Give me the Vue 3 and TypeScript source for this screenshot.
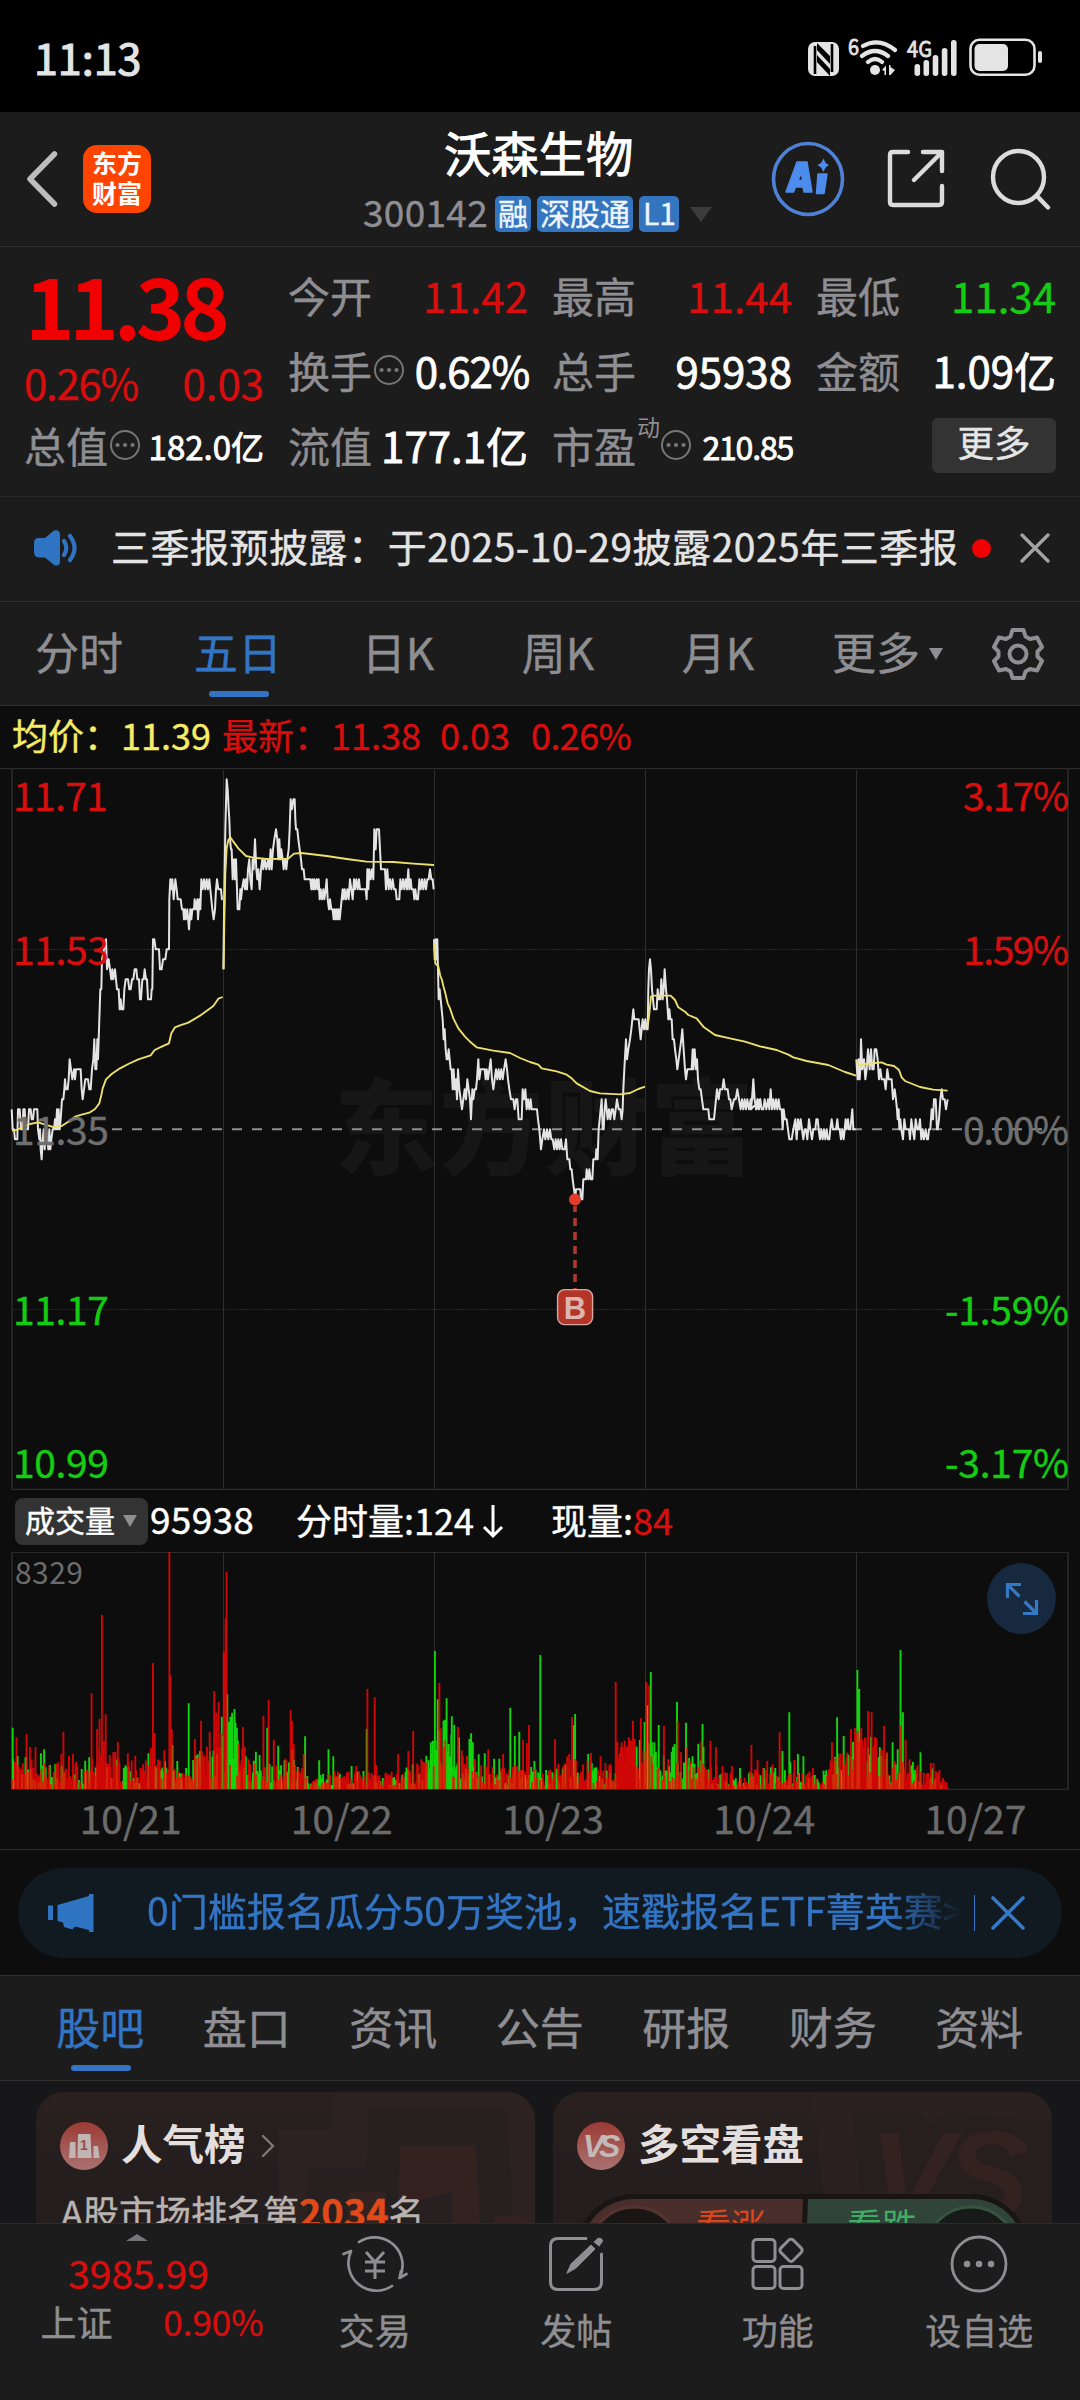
<script setup lang="ts">
interface Segment {
  dx: number
  dy: number
  data: string
}

// One unit of the price chart is a third of a pixel; a cent is 30 units high.
const ZERO = 1084

const priceDays: Segment[][] = [
  [{ dx: 0, dy: 0, data: '35:2 38:0 42:0 45:-1 52:-1 54:2 59:2 63:0 68:0 70:2 74:2 77:0 84:0 87:2 92:2 95:1 99:1 102:2 112:2 114:0 118:-1 120:0 122:-2 125:-3 128:-1 131:0 134:-2 138:0 142:-1 145:-2 148:0 151:-2 154:-1 158:0 162:0 165:1 168:0 171:2 174:0 176:2 179:0 182:1 186:3 190:3 193:4 195:5 198:4 203:4 206:5 209:7 213:6 217:5 222:6 225:5 228:6 242:6 245:4 248:3 252:4 256:5 264:5 268:4 272:4 276:6 280:7 283:9 286:6 289:6 292:9 294:7 296:9 298:11 301:14 304:14 306:17 312:18 318:19 321:16 326:17 330:16 334:15 337:16 340:15 345:16 348:15 351:14 356:14 359:12 362:13 365:12 370:12 373:14 377:15 384:15 388:14 392:14 396:15 400:15 404:16 409:16 412:15 417:15 420:13 423:13 427:15 431:15 434:16 438:15 441:15 444:13 453:13 455:14 457:14 459:19 463:19 467:18 477:18 480:16 485:16 489:17 496:17 500:18 507:18 508:23 511:25 514:24 517:25 521:23 526:25 530:24 533:23 542:23 546:22 550:22 552:21 555:22 558:21 562:22 567:20 571:22 574:21 577:22 582:22 584:23 588:22 592:23 594:21 598:23 601:22 604:25 608:24 612:25 616:24 620:25 624:24 628:25 631:24 634:23 637:22 641:21 645:22 648:24 651:25 655:24 663:24 666:23 668:23' }],
  [{ dx: 0, dy: 0, data: '670:16 673:24 676:30 680:35 683:34 686:32 688:31 690:29 693:28 695:28 698:25 702:27 705:25 708:27 711:24 713:22 718:22 721:24 723:23 726:24 731:25 735:24 738:25 741:24 744:26 748:27 751:25 755:24 758:27 761:26 765:29 769:26 772:25 775:26 779:24 783:26 787:27 790:26 794:27 799:26 804:27 808:26 812:28 815:26 819:28 823:29 828:30 832:29 835:27 838:29 841:27 844:28 848:27 851:26 855:27 859:26 862:27 866:28 869:30 872:33 876:32 880:33 884:33 886:31 888:30 892:30 895:29 899:28 903:27 906:26 911:26 914:25 931:25 934:24 937:25 940:24 943:25 946:24 950:25 953:24 956:25 959:23 962:24 966:23 970:24 973:23 977:24 980:25 983:23 987:22 990:23 994:22 998:22 1001:21 1004:22 1007:21 1010:22 1013:21 1016:22 1019:21 1022:22 1025:23 1028:24 1031:23 1034:24 1038:23 1042:24 1046:23 1050:25 1054:24 1058:23 1062:25 1065:24 1069:25 1073:24 1077:25 1080:24 1097:24 1100:23 1102:26 1105:24 1108:26 1112:25 1116:26 1120:25 1123:30 1127:28 1130:30 1137:30 1140:28 1143:26 1155:26 1158:24 1162:26 1166:24 1170:25 1174:24 1178:25 1182:24 1187:24 1190:23 1198:23 1201:25 1205:24 1209:25 1213:24 1217:25 1221:24 1225:26 1228:24 1232:25 1235:24 1240:24 1243:23 1246:24 1250:23 1254:23 1258:25 1262:24 1266:25 1270:24 1274:25 1278:24 1282:25 1286:25 1290:26 1294:25 1298:25 1301:24' }],
  [{ dx: 1290, dy: 0, data: '12:19 14:17 17:19 20:17 22:19 24:16 26:13 29:14 32:13 35:12 38:11 41:9 44:10 47:8 50:7 53:7 56:8 59:7 62:6 65:6 68:4 71:6 74:4 78:5 81:3 84:6 88:4 92:3 96:2 100:3 104:4 108:3 112:5 116:4 120:3 123:1 127:4 130:3 134:4 138:4 141:5 145:7 148:5 152:6 164:6 167:5 170:6 174:5 178:6 182:7 186:5 190:4 194:5 198:6 202:5 206:6 210:5 214:6 218:5 222:6 227:7 231:6 234:5 238:4 243:3 250:3 254:2 258:3 262:3 266:1 275:1 278:4 282:3 286:4 290:2 294:3 298:2 302:3 305:2 321:2 324:1 328:0 333:-2 337:-1 342:0 346:-1 351:0 355:-1 360:0 364:-1 368:-1 373:-2 377:-1 381:-2 385:-1 389:-2 393:-1 397:-2 404:-2 408:-1 412:-3 418:-3 421:-4 425:-4 428:-5 432:-6 436:-7 438:-6 451:-6 453:-7 457:-7 460:-5 468:-5 470:-4 475:-5 478:-4 482:-5 487:-5 490:-3 497:-3 499:-2 503:-3 506:0 509:1 512:2 515:3 518:0 521:0 524:2 527:3 530:2 533:1 537:2 541:1 545:2 549:2 553:1 557:2 561:3 566:2 571:2 575:1 578:2 580:4 583:6 588:9 591:7 595:8 600:9 604:10 607:11 610:12 613:11 626:11 629:10 632:9 635:10 638:11 642:10 646:11 649:10 653:10 655:14 657:16 660:17 663:16 666:14 669:13 672:12 680:12 683:14 687:13 691:13 694:15 698:13 701:14 704:16 708:14 711:13 715:11 718:12 721:11 725:11 728:9 732:9 735:8 739:7 742:6 746:7 750:8 754:9 757:10 761:8 765:6 768:5 772:6 785:6 788:8 790:6 794:8 798:6 801:7 804:5 808:4 812:4 816:3 820:2 835:2 838:1 852:1 855:2 858:3 861:4 866:3 870:4 877:4 881:5 885:4 893:4 897:3 901:3 905:2 912:3 917:3 922:4 927:3 932:2 936:3 940:2 944:3 948:2 952:3 957:2 962:3 967:3 970:5 974:3 978:2 982:3 986:2 990:3' },
   { dx: 2250, dy: 0, data: '3:2 6:3 10:5 14:3 19:2 23:3 27:2 31:3 35:2 40:2 44:3 49:2 54:3 58:2 62:4 66:2 70:3 74:2 78:3 82:2 86:3 90:2 95:2 98:0 101:2 105:1 110:1 114:0 118:-1 125:-1 130:0 136:1 140:-1 144:1 148:0 152:1 156:0 160:-1 164:0 168:0 172:-1 177:1 181:0 186:-1 190:0 196:0 199:1 203:1 206:0 210:-1 214:0 218:-1 222:0 226:-1 230:0 234:-1 238:-1 241:0 245:1 249:0 258:0 262:1 265:0 269:0 273:-1 277:0 281:-1 284:0 287:1 290:0 294:1 297:0 301:0 304:1 307:2 310:0 317:0' }],
  [{ dx: 2250, dy: 0, data: '319:7 323:5 326:7 329:5 331:6 333:9 337:6 342:7 346:5 350:6 354:8 359:6 363:8 367:6 371:6 374:8 379:8 383:7 387:5 391:6 395:5 403:5 407:4 412:6 416:5 425:5 429:3 434:4 438:3 441:2 443:1 446:2 448:0 451:1 454:0 459:-1 463:1 467:0 477:0 480:-1 484:1 488:0 493:-1 497:1 502:0 506:0 510:1 514:-1 518:0 522:-1 527:0 531:-1 534:-1 537:0 541:0 545:2 549:1 552:3 557:3 561:0 563:0 567:1 571:3 575:4 579:3 584:3 588:2 593:3' }]
]

const averageDays: Segment[][] = [
  [{ dx: 0, dy: -24, data: '36:1112 50:1110 70:1100 90:1092 115:1087 135:1094 160:1101 185:1098 205:1085 225:1070 245:1064 268:1058 285:1047 298:1030 304:1005 308:985 318:958 335:942 360:925 385:912 415:898 452:886 464:870 485:860 507:850 514:820 525:802 540:796 565:788 600:767 640:738 655:716 668:711' }],
  [{ dx: 0, dy: -24, data: '671:628 673:480 676:340 680:265 685:240 691:232 700:245 715:265 738:288 760:293 800:297 865:296 882:281 905:279 980:288 1040:297 1100:305 1180:306 1240:311 1302:315' }],
  [{ dx: 1290, dy: 396, data: '13:130 16:190 20:195 24:195 31:228 36:240 40:258 46:280 53:310 60:325 70:355 85:385 105:410 120:425 140:442 190:452 240:459 270:474 300:486 325:494 335:505 380:514 410:524 425:535 440:550 480:573 510:580 570:583 600:579 625:567 645:560' }],
  [{ dx: 1290, dy: 396, data: '653:380 657:350 663:290 670:287 722:287 735:300 745:322 765:335 775:345 800:355 820:380 855:405 900:415 945:425 990:439' },
   { dx: 2250, dy: -24, data: '30:859 80:870 115:884 130:892 170:903 235:915 285:936 318:947' }],
  [{ dx: 2250, dy: -24, data: '319:903 322:905 328:918 345:912 395:907 410:914 432:918 447:930 455:952 465:963 510:981 550:989 593:992' }]
]

function toPoints(segments: Segment[], toY: (v: number) => number): string {
  return segments
    .flatMap((s) => s.data.split(' ').map((p) => {
      const [x, v] = p.split(':').map(Number)
      return `${x + s.dx},${toY(v) + s.dy}`
    }))
    .join(' ')
}

const priceLines = priceDays.map((d) => toPoints(d, (v) => ZERO - v * 30))
const averageLines = averageDays.map((d) => toPoints(d, (v) => v))

// Volume peaks: x, top and direction (r = up, g = down).
const peaks = '37,743g 48,772r 77,762r 87,801r 103,801r 128,808g 119,820g 145,855g 184,755r 178,822r 200,827r 212,822r 266,640r 259,832g 296,405r 282,747r 289,717r 307,703r 301,782r 342,786r 335,815r 371,820r 393,827r 431,820g 444,549r 449,759r 438,804r 477,811r 492,216r 495,586r 499,747r 501,795g 515,843g 548,670g 566,777r 568,827g 584,722r 581,813g 601,800r 609,755r 622,633r 628,698r 635,666r 644,710g 650,515r 655,415r 658,276r 660,643g 664,725g 669,710g 674,698g 681,687g 684,728g 688,743g 706,741r 711,800r 743,815g 754,825g 765,707r 780,660r 776,743g 795,780r 808,797g 844,690r 848,722r 853,792r 849,808g 886,769g 882,822r 927,841g 954,808g 968,829g 1021,858g 1035,858r 1067,627r 1065,747g 1088,652r 1093,855r 1156,822r 1186,813r 1200,753r 1238,827g 1251,787g 1257,782g 1263,513g 1271,658g 1276,609r 1280,745r 1288,722g 1292,719g 1297,655g 1312,709g 1319,735g 1330,741r 1333,772g 1344,827r 1356,827r 1363,777g 1368,760g 1373,787g 1390,823g 1408,820g 1418,808r 1435,836g 1450,836g 1461,822r 1482,683g 1495,768g 1508,755g 1519,780r 1530,790r 1536,735r 1552,843g 1569,525g 1586,870g 1612,778r 1636,858r 1653,822r 1661,710r 1667,735g 1670,702g 1708,822g 1716,819r 1744,829r 1758,849r 1773,852r 1788,606r 1793,785r 1808,801r 1814,782r 1826,772r 1838,722r 1861,715r 1858,780g 1872,726g 1876,606r 1880,676g 1885,616r 1890,576g 1893,787g 1900,787g 1913,735g 1928,738r 1954,800g 1959,792g 1966,666g 1968,725r 1978,817r 1992,728g 1995,804r 2011,829g 2028,791g 2040,732g 2037,783r 2043,801g 2063,782r 2079,801r 2098,858r 2126,858r 2149,864g 2182,795r 2200,840r 2228,843r 2244,853r 2264,757r 2272,813g 2292,697g 2295,846g 2307,840r 2317,822g 2333,829g 2361,864r 2416,787r 2431,712g 2426,834r 2450,768g 2471,747r 2477,785g 2483,744r 2490,570g 2495,627g 2501,778r 2514,775r 2521,693r 2531,697r 2541,771r 2567,738r 2576,817r 2559,808r 2592,787g 2607,808g 2615,510g 2622,697g 2616,738r 2630,780r 2651,846g 2673,817g 2703,849r 2711,849r 2728,870r'

// Typical bar height by position, with the share of falling minutes.
const envelope: [number, number, number][] = [
  [12, 36, 0.4], [50, 24, 0.4], [90, 26, 0.25], [105, 52, 0.05], [115, 30, 0.4], [150, 26, 0.2], [172, 28, 0.4],
  [190, 24, 0.4], [205, 40, 0.3], [222, 62, 0.3], [232, 60, 0.8], [245, 34, 0.4], [258, 24, 0.6], [290, 30, 0.3],
  [310, 15, 0.6], [345, 19, 0.3], [370, 16, 0.4], [400, 16, 0.4], [425, 30, 0.3], [436, 60, 0.8], [450, 58, 0.7],
  [470, 32, 0.4], [500, 19, 0.4], [520, 24, 0.5], [545, 16, 0.5], [565, 32, 0.25], [590, 25, 0.3], [615, 21, 0.3],
  [622, 48, 0.1], [640, 52, 0.3], [652, 48, 0.7], [668, 36, 0.8], [690, 32, 0.4], [710, 23, 0.4], [740, 14, 0.3],
  [765, 21, 0.3], [800, 17, 0.3], [820, 16, 0.4], [843, 38, 0.3], [858, 58, 0.3], [875, 50, 0.3], [890, 28, 0.3],
  [904, 38, 0.4], [925, 16, 0.4], [935, 21, 0.3], [949, 5, 0.2]
]

interface Bar {
  x: number
  h: number
  up: boolean
}

function buildBars(): Bar[] {
  let seed = 20251
  const rand = () => {
    seed = (seed * 16807) % 2147483647
    return seed / 2147483647
  }
  const bars: Bar[] = []
  for (let i = 0; i < 1066; i++) {
    const x = 12.3 + i * 0.878
    const k = Math.max(1, envelope.findIndex((e) => e[0] >= x))
    const [x0, h0, g0] = envelope[k - 1]
    const [x1, h1, g1] = envelope[k]
    const t = (x - x0) / (x1 - x0)
    const h = (h0 + (h1 - h0) * t) * (0.2 + 0.9 * Math.pow(rand(), 1.3))
    bars.push({ x, h, up: rand() > g0 + (g1 - g0) * t })
  }
  for (const p of peaks.split(' ')) {
    const [x, y] = p.slice(0, -1).split(',').map(Number)
    bars.push({ x: x / 2.904, h: (927 - y) / 3, up: p.endsWith('r') })
  }
  return bars.sort((a, b) => a.x - b.x)
}

const bars = buildBars()
const barPath = (up: boolean) =>
  bars.filter((b) => b.up === up).map((b) => `M${b.x.toFixed(1)} 237V${(237 - b.h).toFixed(1)}`).join('')
const upBars = barPath(true)
const downBars = barPath(false)

const gridX = [223.5, 434.5, 645.5, 856.5]
const leftAxis = [
  { v: '11.71', y: 43, w: 95, c: 'up' },
  { v: '11.53', y: 197, w: 96, c: 'up' },
  { v: '11.35', y: 377, w: 96, c: 'flat' },
  { v: '11.17', y: 557, w: 96, c: 'down' },
  { v: '10.99', y: 710, w: 96, c: 'down' }
]
const rightAxis = [
  { v: '3.17%', y: 43, w: 106, c: 'up' },
  { v: '1.59%', y: 197, w: 106, c: 'up' },
  { v: '0.00%', y: 377, w: 106, c: 'flat' },
  { v: '-1.59%', y: 557, w: 124, c: 'down' },
  { v: '-3.17%', y: 710, w: 124, c: 'down' }
]
const dates = ['10/21', '10/22', '10/23', '10/24', '10/27']
const periods = ['分时', '五日', '日K', '周K', '月K']
const sections = ['股吧', '盘口', '资讯', '公告', '研报', '财务', '资料']
</script>

<template>
  <div class="screen">
    <div class="status">
      <span class="clock">11:13</span>
      <svg class="status-icons" width="240" height="44" viewBox="805 36 240 44">
        <g fill="#e4e4e4">
          <rect x="808" y="43" width="31" height="34" rx="7" />
          <path d="M815 47V75M832 45V73" stroke="#000" stroke-width="2.600" />
          <path d="M817 44L830 57V65L817 51ZM817 56L830 70V77L817 63Z" fill="#000" />
          <text x="848" y="56" class="tiny" textLength="11" lengthAdjust="spacingAndGlyphs">6</text>
          <text x="907" y="58" class="tiny" textLength="25" lengthAdjust="spacingAndGlyphs">4G</text>
          <circle cx="875" cy="71" r="5" />
          <path d="M882 71l4-4.500v9.500h-1.500v-4zM889 66h1.500v2l4.500 3-4.500 5h-1.500z" />
          <rect x="914.500" y="65" width="5.600" height="12" rx="2.700" />
          <rect x="923.500" y="61" width="5.600" height="16" rx="2.700" />
          <rect x="932.700" y="56" width="5.600" height="21" rx="2.700" />
          <rect x="941.800" y="49" width="5.600" height="28" rx="2.700" />
          <rect x="951" y="41" width="5.600" height="36" rx="2.700" />
          <rect x="974.500" y="45" width="33.500" height="27" rx="5" />
          <rect x="1038" y="52" width="4" height="12" rx="2" />
        </g>
        <g fill="none" stroke="#e4e4e4" stroke-linecap="round">
          <rect x="970.500" y="40.800" width="64" height="35" rx="9" stroke-width="2.600" />
          <path d="M868 63Q875 57 882 63M862 57Q875 47 888 57M863 47Q879 38 895 51" stroke-width="4.200" />
        </g>
      </svg>
    </div>

    <header class="head">
      <div class="head-left">
        <svg width="32" height="58" viewBox="0 0 32 58"><path d="M28.500 4L4 29 28.500 54" fill="none" stroke="#bdbdbd" stroke-width="5.500" stroke-linecap="round" stroke-linejoin="round" /></svg>
        <div class="logo"><span>东方</span><span>财富</span></div>
      </div>
      <div class="head-title">
        <h1>沃森生物</h1>
        <div class="code">
          <span class="num">300142</span>
          <span class="tag one">融</span><span class="tag">深股通</span><span class="tag lv">L1</span>
          <i class="caret"></i>
        </div>
      </div>
      <div class="head-right">
        <svg width="74" height="76" viewBox="0 0 74 76">
          <ellipse cx="37" cy="38" rx="34.500" ry="35.500" fill="none" stroke="#4f82d6" stroke-width="3.600" />
          <path d="M15 51L26 21H36L41 51H33L32 46H24.500L22.500 51ZM27 39.500H31.500L30.500 31.500ZM47 33H56L53 52.500H45.500Z" fill="#4d8bec" stroke="#4d8bec" stroke-width="1.500" stroke-linejoin="round" />
          <path d="M52.500 17.500L54.600 22 58 24 54.600 26.500 52.500 31 50 26.500 46.500 24 50 22Z" fill="#4d8bec" />
        </svg>
        <svg width="58" height="60" viewBox="0 0 58 60" fill="none" stroke="#dcdcdc" stroke-width="4.400" stroke-linecap="round" stroke-linejoin="round">
          <path d="M21 3H6Q3 3 3 6V53Q3 56 6 56H52Q55 56 55 53V37" />
          <path d="M36 3H55V22M55 3L27 31" />
        </svg>
        <svg width="62" height="64" viewBox="0 0 62 64" fill="none" stroke="#dcdcdc" stroke-width="4.400" stroke-linecap="round">
          <ellipse cx="29.500" cy="30" rx="25.500" ry="26" /><path d="M48 49L59 60.500" />
        </svg>
      </div>
    </header>

    <section class="quote">
      <div class="price">
        <div class="last">11.38</div>
        <div class="change"><span class="pct">0.26%</span><span>0.03</span></div>
      </div>
      <div class="cell"><label>今开</label><b class="red">11.42</b></div>
      <div class="cell"><label>最高</label><b class="red">11.44</b></div>
      <div class="cell"><label>最低</label><b class="green">11.34</b></div>
      <div class="cell">
        <label>换手</label>
        <svg class="info" viewBox="0 0 32 32"><circle cx="16" cy="16" r="14" /><path d="M8.500 16h.1M16 16h.1M23.500 16h.1" /></svg>
        <b class="tight">0.62%</b>
      </div>
      <div class="cell"><label>总手</label><b>95938</b></div>
      <div class="cell"><label>金额</label><b>1.09亿</b></div>
      <div class="cell first">
        <label>总值</label>
        <svg class="info" viewBox="0 0 32 32"><circle cx="16" cy="16" r="14" /><path d="M8.500 16h.1M16 16h.1M23.500 16h.1" /></svg>
        <b class="small">182.0亿</b>
      </div>
      <div class="cell"><label>流值</label><b>177.1亿</b></div>
      <div class="cell">
        <label>市盈</label><sup>动</sup>
        <svg class="info" viewBox="0 0 32 32"><circle cx="16" cy="16" r="14" /><path d="M8.500 16h.1M16 16h.1M23.500 16h.1" /></svg>
        <b class="small ratio">210.85</b>
      </div>
      <div class="cell end"><button class="more"><span>更多</span></button></div>
    </section>

    <section class="notice">
      <svg width="46" height="38" viewBox="0 0 46 38">
        <path d="M6 9H12L21 1.500Q27 0 27 6V32Q27 38 21 36L12 28.500H6Q1 28 1 23V14Q1 9 6 9Z" fill="#2f74c2" />
        <path d="M31 12Q35.500 19 31 26M37 7Q46 19 37 31" fill="none" stroke="#2f74c2" stroke-width="4.200" stroke-linecap="round" />
      </svg>
      <p>三季报预披露：于2025-10-29披露2025年三季报</p>
      <i class="dot"></i>
      <svg width="32" height="32" viewBox="0 0 32 32"><path d="M3 3L29 29M29 3L3 29" stroke="#a3a3a3" stroke-width="3.400" stroke-linecap="round" /></svg>
    </section>

    <nav class="periods">
      <div v-for="(p, i) in periods" :key="p" class="period" :class="{ active: i === 1 }"><span>{{ p }}</span></div>
      <div class="period-more"><span>更多</span><i></i></div>
      <svg width="54" height="54" viewBox="-27 -27 54 54" fill="none" stroke="#8e8e93" stroke-width="4" stroke-linejoin="round">
        <path d="M-5.500-24H5.500L7.500-17.500 12-15 19-16.500 24-7 19.500-2.500V2.500L24 7 19 16.500 12 15 7.500 17.500 5.500 24H-5.500L-7.500 17.500-12 15-19 16.500-24 7-19.500 2.500V-2.500L-24-7-19-16.500-12-15-7.500-17.500Z" />
        <circle r="8.500" />
      </svg>
    </nav>

    <div class="legend">
      <span class="avg">均价：</span><span class="avg n1">11.39</span>
      <span class="now">最新：</span><span class="now n2">11.38</span><span class="now n3">0.03</span><span class="now n4">0.26%</span>
    </div>

    <svg class="chart" width="1080" height="722" viewBox="0 0 1080 722">
      <text x="334" y="399" class="mark" textLength="420">东方财富</text>
      <g stroke="#2d2d2d" stroke-width="1.200">
        <path d="M0 .6H1080M12 721.300H1068" />
        <path v-for="x in gridX" :key="x" :d="`M${x} 2V721`" />
      </g>
      <path d="M12 0V722M1068 0V722" stroke="#242424" stroke-width="2" />
      <path d="M12 181.500H1068M12 541.500H1068" stroke="#303030" stroke-width="1" stroke-dasharray="1.500 1.500" />
      <path d="M112 361.300H1068" stroke="#909090" stroke-width="2" stroke-dasharray="10 10" />
      <g transform="scale(.33333)" fill="none" stroke-linejoin="round">
        <polyline v-for="(l, i) in priceLines" :key="'p' + i" :points="l" stroke="#e4e4e4" stroke-width="6" />
        <polyline v-for="(l, i) in averageLines" :key="'a' + i" :points="l" stroke="#eee06c" stroke-width="5.600" />
      </g>
      <text v-for="a in leftAxis" :key="a.v" x="13" :y="a.y" :textLength="a.w" class="axis" :class="a.c">{{ a.v }}</text>
      <text v-for="a in rightAxis" :key="a.v" x="1069" :y="a.y" :textLength="a.w" class="axis right" :class="a.c">{{ a.v }}</text>
      <circle cx="575" cy="431.500" r="6" fill="#e23d2a" />
      <path d="M575 438V522" stroke="#b0382b" stroke-width="3.600" stroke-dasharray="8 6" stroke-dashoffset="2" />
      <rect x="557.600" y="521.600" width="35" height="35" rx="7" fill="#b23528" stroke="#d8a9a2" stroke-width="1.400" />
      <text x="575" y="550.500" class="buy">B</text>
    </svg>

    <div class="vol-head">
      <div class="picker"><span>成交量</span><i></i></div>
      <span class="v1">95938</span>
      <span class="v2">分时量:124</span>
      <svg width="22" height="36" viewBox="0 0 22 36"><path d="M11 2V33M2 24L11 33 20 24" fill="none" stroke="#fff" stroke-width="3" /></svg>
      <span class="v3">现量:<em>84</em></span>
    </div>

    <div class="volume">
      <svg width="1080" height="238" viewBox="0 0 1080 238">
        <path d="M12 .5H1068M12 237.300H1068" stroke="#2a2a2a" stroke-width="1.200" />
        <path v-for="x in gridX" :key="x" :d="`M${x} 0V237`" stroke="#2d2d2d" stroke-width="1.200" />
        <path d="M12 0V238M1068 0V238" stroke="#242424" stroke-width="2" />
        <path :d="downBars" stroke="#12d40c" stroke-width="1.900" />
        <path :d="upBars" stroke="#fa0505" stroke-opacity=".82" stroke-width="1.900" />
        <text x="15" y="32" class="vmax" textLength="68">8329</text>
      </svg>
      <button class="expand">
        <svg width="36" height="36" viewBox="0 0 36 36" fill="none" stroke="#3478c6" stroke-width="3.200">
          <path d="M17 3.500H3.500V17M4 4L15.500 15.500M19 32.500H32.500V19M32 32L20.500 20.500" />
        </svg>
      </button>
    </div>

    <div class="dates"><span v-for="d in dates" :key="d">{{ d }}</span></div>

    <section class="promo">
      <div class="pill">
        <svg width="46" height="40" viewBox="0 0 46 40" fill="#2f74c2">
          <path d="M0 12.500H5V27H0ZM9.500 12L41 3V1H45.500V39H41V37L27 33.500 24.500 36.500 16 34 15 29.500 9.500 28Z" />
        </svg>
        <p>0门槛报名瓜分50万奖池，速戳报名ETF菁英赛&gt;&gt;</p>
        <i></i>
        <svg width="36" height="36" viewBox="0 0 36 36"><path d="M3 3L33 33M33 3L3 33" stroke="#3478c6" stroke-width="3.600" stroke-linecap="round" /></svg>
      </div>
    </section>

    <nav class="sections">
      <div v-for="(s, i) in sections" :key="s" :class="{ active: i === 0 }"><span>{{ s }}</span></div>
    </nav>

    <section class="cards">
      <article class="card">
        <svg class="bg" width="499" height="132" viewBox="0 0 499 132">
          <path d="M243 132V38H296L298 0H499V132Z" fill="#2c2221" />
          <path d="M271 132V75H330L334 17H471L477 132Z" fill="#272020" />
          <path d="M364 53H440L444 132H416V99L362 115Z" fill="#342221" />
          <path d="M313 100H350V132H311Z M458 124H490V132H458Z" fill="#342221" />
        </svg>
        <div class="title">
          <svg width="48" height="48" viewBox="0 0 48 48">
            <defs><linearGradient id="badge" x1="0" y1="0" x2="0" y2="1"><stop offset="0" stop-color="#9c3a35" /><stop offset="1" stop-color="#a97370" /></linearGradient></defs>
            <circle cx="24" cy="24" r="24" fill="url(#badge)" />
            <path d="M10 20H15.500V36H9ZM18 12H30.500L31.500 36H17.500ZM33.500 24H38L39.500 36H33.500Z" fill="#c0b5b4" />
            <text x="24" y="28" class="one-mark">1</text>
          </svg>
          <h2>人气榜</h2>
          <svg class="chev" width="16" height="26" viewBox="0 0 16 26"><path d="M3 3L13 13 3 23" fill="none" stroke="#7d7978" stroke-width="2.400" stroke-linecap="round" /></svg>
        </div>
        <p class="rank">A股市场排名第<b>2034</b>名</p>
      </article>
      <article class="card">
        <svg class="bg" width="499" height="132" viewBox="0 0 499 132">
          <path d="M259 0H499V132H274Z" fill="#2b2120" />
          <path d="M300 20H366L378 33 394 20 499 30V132H309Z" fill="#271f1e" />
          <text x="316" y="128" class="vs-mark">VS</text>
        </svg>
        <div class="title">
          <svg width="48" height="48" viewBox="0 0 48 48">
            <circle cx="24" cy="24" r="24" fill="url(#badge)" />
            <text x="22" y="35" class="vs">VS</text>
          </svg>
          <h2>多空看盘</h2>
        </div>
        <svg class="vote" width="499" height="36" viewBox="0 0 499 36">
          <rect x="22" y="6" width="455" height="118" rx="59" fill="#1a1515" />
          <path d="M250 11H81.500A54 54 0 0 0 81.500 119H246Z" fill="#4a2e2c" />
          <path d="M255 11H418A54 54 0 0 1 418 119H251Z" fill="#30443a" />
          <circle cx="81.500" cy="65" r="46" fill="#1a1515" stroke="#57332f" stroke-width="3" />
          <circle cx="418" cy="65" r="46" fill="#171a18" stroke="#36543f" stroke-width="3" />
          <text x="143" y="51" class="long">看涨</text>
          <text x="294" y="51" class="short">看跌</text>
        </svg>
      </article>
    </section>

    <footer class="bar">
      <div class="index">
        <i></i>
        <div class="pts">3985.99</div>
        <div class="row"><span>上证</span><b>0.90%</b></div>
      </div>
      <div class="item">
        <svg width="66" height="58" viewBox="-33 -29 66 58" fill="none" stroke="#8e8e93" stroke-width="2.700" stroke-linecap="round" stroke-linejoin="round">
          <path d="M-16-22A28 28 0 0 1 24.500 14L31.500 10M24.500 14L26 7M17 22A28 28 0 0 1-24-13L-31.500-10M-24-13L-26-7" />
          <path d="M-9-12L0-2 9-12M0-2V15M-10-2H10M-10 7H10" stroke-width="3" stroke-linecap="butt" />
        </svg>
        <span>交易</span>
      </div>
      <div class="item">
        <svg width="58" height="58" viewBox="0 0 58 58" fill="none" stroke="#8e8e93" stroke-width="3" stroke-linecap="round">
          <path d="M39 3.500H11Q3.500 3.500 3.500 11V47Q3.500 54.500 11 54.500H47Q54.500 54.500 54.500 47V19" />
          <path d="M20 38L24 29 44 10 48 14 29 33Z" fill="#8e8e93" stroke-width="1" />
          <path d="M48 7L51 4Q54 3 55 6L52 10Z" fill="#8e8e93" stroke-width="2" />
        </svg>
        <span>发帖</span>
      </div>
      <div class="item">
        <svg width="58" height="58" viewBox="0 0 58 58" fill="none" stroke="#8e8e93" stroke-width="3">
          <rect x="4" y="4.500" width="22" height="22" rx="3.500" /><rect x="4" y="31.500" width="22" height="22" rx="3.500" /><rect x="31" y="31.500" width="22" height="22" rx="3.500" />
          <rect x="33.300" y="6.500" width="17.500" height="17.500" rx="3" transform="rotate(45 42 15.250)" />
        </svg>
        <span>功能</span>
      </div>
      <div class="item">
        <svg width="58" height="58" viewBox="-29 -29 58 58" fill="none" stroke="#8e8e93" stroke-width="2.800">
          <circle r="27" /><path d="M-12 0h.1M0 0h.1M12 0h.1" stroke-width="6.400" stroke-linecap="round" />
        </svg>
        <span>设自选</span>
      </div>
    </footer>
  </div>
</template>

<style>
body {
  background: #0d0d0d;
}
</style>

<style scoped>
.screen {
  width: 1080px;
  height: 2400px;
  overflow: hidden;
  display: flex;
  flex-direction: column;
  background: #0d0d0d;
  color: #8e8e93;
  font-family: "Noto Sans CJK SC", sans-serif;
  line-height: 1;
  white-space: nowrap;
  -webkit-text-stroke: 0.4px currentColor;
}
.screen > * {
  box-sizing: border-box;
  flex: none;
}
h1, h2, p {
  margin: 0;
  font-weight: 400;
}
i, em {
  font-style: normal;
}
button {
  border: 0;
  padding: 0;
  font: inherit;
}

.status {
  height: 112px;
  background: #000;
  display: flex;
  align-items: center;
  justify-content: space-between;
  padding: 2px 35px 0 34px;
}
.clock {
  color: #e4e4e4;
  font-size: 43px;
  margin-top: -2px;
  -webkit-text-stroke: 1.2px currentColor;
}
.tiny {
  font: 400 22px "Noto Sans CJK SC", sans-serif;
  stroke: #e4e4e4;
  stroke-width: 0.8px;
}

.head {
  height: 135px;
  background: #1c1c1c;
  border-bottom: 1px solid #303030;
  display: grid;
  grid-template-columns: 360px 1fr 310px;
}
.head-left {
  display: flex;
  align-items: center;
  gap: 25px;
  padding: 0 0 0 26px;
}
.logo {
  width: 68px;
  height: 68px;
  border-radius: 14px;
  background: #ff4400;
  color: #fff;
  display: flex;
  flex-direction: column;
  align-items: center;
  justify-content: center;
  font-size: 25px;
  line-height: 30px;
  font-weight: 700;
  -webkit-text-stroke: 0;
}
.logo span:first-child {
  margin-top: -4px;
}
.head-title h1 {
  color: #fff;
  font-size: 47.300px;
  line-height: 60px;
  padding: 10px 0 0 84px;
  -webkit-text-stroke: 1px currentColor;
}
.code {
  display: flex;
  align-items: center;
  height: 36px;
  margin-top: 14px;
  padding-left: 3px;
}
.num {
  font-size: 37px;
  margin-top: -5px;
  width: 132px;
  letter-spacing: 0.300px;
}
.tag {
  height: 36px;
  box-sizing: border-box;
  border-radius: 5px;
  background: #3375be;
  color: #eef5ff;
  font-size: 30px;
  line-height: 32px;
  padding: 0 3px;
  margin-right: 6px;
}
.tag.lv {
  width: 40px;
  padding-left: 4px;
}
.caret {
  margin-left: 5px;
  border: 11px solid transparent;
  border-top: 15px solid #3c3c3c;
  border-bottom: 0;
}
.head-right {
  display: flex;
  align-items: center;
  padding: 0 0 0 1px;
}
.head-right svg:nth-child(2) {
  margin-left: 42px;
}
.head-right svg:nth-child(3) {
  margin-left: 44px;
}

.quote {
  height: 250px;
  background: #1c1c1c;
  border-bottom: 1px solid #282828;
  padding: 13px 24px 0 25px;
  display: grid;
  grid-template-columns: 239px 240px 240px 240px;
  grid-template-rows: 75px 75px 75px;
  column-gap: 24px;
}
.price {
  grid-row: span 2;
}
.last {
  color: #f00000;
  font-size: 84px;
  font-weight: 700;
  line-height: 85px;
  margin-top: 1px;
  letter-spacing: -5.200px;
  -webkit-text-stroke: 0;
}
.change {
  display: flex;
  justify-content: space-between;
  color: #d80d0d;
  font-size: 42px;
  line-height: 42px;
  margin-top: 15px;
}
.pct {
  letter-spacing: -1.300px;
  margin-left: -1px;
}
.cell {
  display: flex;
  align-items: center;
  color: #fff;
  font-size: 42px;
}
.cell.first {
  margin-left: -1px;
}
.cell label {
  color: #8e8e93;
  margin-top: -5px;
}
.cell b {
  margin: -5px 0 0 auto;
  font-weight: 400;
  -webkit-text-stroke: 0.8px currentColor;
}
.cell .tight {
  letter-spacing: -1.200px;
  margin-right: -1px;
}
.cell .small {
  font-size: 33px;
  margin-top: -3px;
}
.cell .ratio {
  font-size: 32px;
  letter-spacing: -1.200px;
  margin-right: -1px;
}
.cell .red {
  color: #d80d0d;
  -webkit-text-stroke-width: 0.4px;
}
.cell .green {
  color: #14cc14;
  -webkit-text-stroke-width: 0.4px;
}
.cell sup {
  color: #8e8e93;
  font-size: 23px;
  line-height: 1;
  margin: -42px -1px 0 1px;
  -webkit-text-stroke: 0;
}
.info {
  width: 32px;
  height: 32px;
  margin: -6px -2px 0 1px;
  fill: none;
  stroke: #767676;
  stroke-width: 2;
}
.info path {
  stroke-width: 4.200;
  stroke-linecap: round;
}
.end {
  justify-content: flex-end;
}
.more {
  width: 124px;
  height: 55px;
  border-radius: 6px;
  background: #333;
  color: #e6e6e6;
  font-size: 36.500px;
  display: flex;
  align-items: center;
  justify-content: center;
  margin: -4px 0 0 0;
}
.more span {
  margin-top: -6px;
}

.notice {
  height: 105px;
  background: #1c1c1c;
  border-bottom: 1px solid #303030;
  display: flex;
  align-items: center;
  padding: 0 0 3px 33px;
}
.notice p {
  color: #e4e4e4;
  font-size: 39px;
  letter-spacing: 0.520px;
  width: 847px;
  margin: -5px 0 0 32px;
}
.dot {
  width: 19px;
  height: 19px;
  border-radius: 50%;
  background: #f00000;
  margin: 2px 28px 0 14px;
}

.periods {
  height: 104px;
  background: #1c1c1c;
  border-bottom: 1px solid #303030;
  display: flex;
  align-items: center;
  font-size: 44px;
}
.period {
  width: 160px;
  height: 103px;
  display: flex;
  flex-direction: column;
  align-items: center;
  justify-content: space-between;
}
.period:first-child {
  width: 158px;
}
.period span {
  margin-top: 27px;
}
.period.active {
  color: #3375c4;
}
.period.active::after,
.sections .active::after {
  content: "";
  width: 60px;
  height: 6px;
  border-radius: 3px;
  background: #3375c4;
}
.period.active::after {
  margin: 0 0 8px 1px;
}
.period-more {
  box-sizing: border-box;
  width: 193px;
  padding-left: 34px;
  display: flex;
  align-items: center;
}
.period-more span {
  margin-top: -5px;
}
.period-more i {
  margin-left: 9px;
  border: 7.500px solid transparent;
  border-top: 12px solid #8e8e93;
  border-bottom: 0;
}

.legend {
  height: 62px;
  display: flex;
  align-items: center;
  font-size: 36px;
  padding: 0 0 6px 12px;
}
.avg {
  color: #f7ec66;
}
.now {
  color: #d80d0d;
}
.avg:not(.n1), .now:nth-child(3) {
  width: 109px;
}
.n1 {
  width: 101px;
}
.n2 {
  width: 109px;
}
.n3 {
  width: 91px;
}
.n4 {
  letter-spacing: -0.600px;
}

.chart {
  display: block;
}
.axis {
  font-size: 39px;
  fill: #6f6f6f;
  stroke: #6f6f6f;
  stroke-width: 0.4px;
}
.axis.up {
  fill: #d80d0d;
  stroke: #d80d0d;
}
.axis.down {
  fill: #14cc14;
  stroke: #14cc14;
}
.right {
  text-anchor: end;
}
.mark {
  font-size: 104px;
  font-weight: 900;
  fill: #161616;
}
.buy {
  font: 700 31px "Liberation Sans", sans-serif;
  fill: #ddb5b0;
  text-anchor: middle;
}

.vol-head {
  height: 62px;
  display: flex;
  align-items: center;
  padding-left: 15px;
  color: #fff;
  font-size: 36px;
}
.vol-head > span {
  margin-top: -5px;
}
.picker {
  width: 133px;
  height: 47px;
  border-radius: 8px;
  background: #333;
  display: flex;
  align-items: center;
  font-size: 30px;
  box-sizing: border-box;
  padding-left: 10px;
}
.picker span {
  margin-top: -5px;
}
.picker i {
  margin-left: 8px;
  border: 7.500px solid transparent;
  border-top: 12px solid #8e8e93;
  border-bottom: 0;
}
.v1 {
  font-size: 37px;
  width: 146px;
  padding-left: 2px;
  letter-spacing: 0.300px;
}
.v2 {
  width: 186px;
}
.v3 {
  margin-left: 47px;
}
.v3 em {
  color: #d80d0d;
}

.volume {
  height: 238px;
  display: grid;
}
.volume > * {
  grid-area: 1 / 1;
}
.vmax {
  font-size: 30px;
  fill: #6b6b6b;
}
.expand {
  width: 69px;
  height: 71px;
  border-radius: 50%;
  background: #17293f;
  justify-self: end;
  margin: 11px 24px 0 0;
  display: flex;
  align-items: center;
  justify-content: center;
}

.dates {
  height: 59px;
  display: grid;
  grid-template-columns: repeat(5, 211.200px);
  padding: 8px 0 0 25px;
  margin-right: -13px;
  text-align: center;
  font-size: 39px;
  color: #6b6b6b;
}

.promo {
  height: 126px;
  border-top: 1px solid #2d2d2d;
  padding: 18px 18px 0;
}
.pill {
  height: 90px;
  border-radius: 45px;
  background: #111921;
  color: #3375c4;
  display: flex;
  align-items: center;
  padding-left: 30px;
}
.pill p {
  width: 812px;
  overflow: hidden;
  font-size: 39px;
  line-height: 60px;
  margin: -8px 0 0 53px;
  -webkit-mask-image: linear-gradient(90deg, #000 740px, transparent 816px);
  mask-image: linear-gradient(90deg, #000 740px, transparent 816px);
}
.pill i {
  width: 1px;
  height: 36px;
  background: #3375c4;
  margin: 0 15px 0 15px;
}

.sections {
  height: 106px;
  background: #1c1c1c;
  border-top: 1px solid #303030;
  border-bottom: 1px solid #303030;
  display: grid;
  grid-template-columns: repeat(7, 146.500px);
  padding-left: 27px;
  font-size: 44px;
}
.sections div {
  display: flex;
  flex-direction: column;
  align-items: center;
  justify-content: space-between;
  height: 104px;
}
.sections span {
  margin-top: 28px;
}
.sections .active {
  color: #3375c4;
}
.sections .active::after {
  margin: 0 0 9px 1px;
}

.cards {
  height: 143px;
  background: #171719;
  padding: 11px 28px 0 36px;
  display: grid;
  grid-template-columns: 499px 499px;
  gap: 18px;
}
.card {
  height: 132px;
  border-radius: 28px 28px 0 0;
  background: linear-gradient(#2a211f, #251e1e 60%);
  overflow: hidden;
  display: grid;
  grid-template-rows: 96px 36px;
}
.card .bg {
  grid-area: 1 / 1 / 3 / 2;
}
.title {
  grid-area: 1 / 1;
  display: flex;
  align-items: center;
  padding: 11px 0 0 24px;
}
.title h2 {
  color: #e3dfde;
  font-size: 41.500px;
  font-weight: 700;
  margin: -6px 14px 0 13px;
  -webkit-text-stroke: 0;
}
.rank {
  grid-area: 2 / 1;
  color: #b9b3b1;
  font-size: 36px;
  padding-left: 25px;
  margin-top: 5px;
}
.rank b {
  color: #e04a18;
  font-size: 38px;
  line-height: 36px;
}
.vote {
  grid-area: 2 / 1;
}
.one-mark {
  font: 700 14px "Liberation Sans", sans-serif;
  fill: #9c4a46;
  text-anchor: middle;
}
.vs {
  font: italic 700 32px "Liberation Sans", sans-serif;
  letter-spacing: -5px;
  fill: #c3b9b8;
  text-anchor: middle;
}
.vs-mark {
  font: italic 700 126px "Liberation Sans", sans-serif;
  letter-spacing: -8px;
  fill: #342221;
}
.long {
  font-size: 35px;
  fill: #d9481c;
}
.short {
  font-size: 35px;
  fill: #3fae62;
}

.bar {
  height: 177px;
  margin-top: -1px;
  background: #1c1c1c;
  border-top: 1px solid #2b2b2b;
  display: grid;
  grid-template-columns: 274px repeat(4, 201.500px);
  font-size: 36px;
}
.index {
  display: flex;
  flex-direction: column;
  align-items: center;
}
.index > i {
  margin-top: 10px;
  border: 11px solid transparent;
  border-bottom: 7px solid #76767a;
  border-top: 0;
}
.pts {
  color: #d80d0d;
  font-size: 39px;
  margin: 12px 0 0 3px;
}
.row {
  display: flex;
  justify-content: space-between;
  width: 223px;
  margin: 11px 0 0 30px;
}
.row b {
  font-weight: 400;
  color: #d80d0d;
  font-size: 35px;
}
.item {
  display: flex;
  flex-direction: column;
  align-items: center;
  padding-top: 11px;
}
.item span {
  margin-top: 18px;
}
</style>
